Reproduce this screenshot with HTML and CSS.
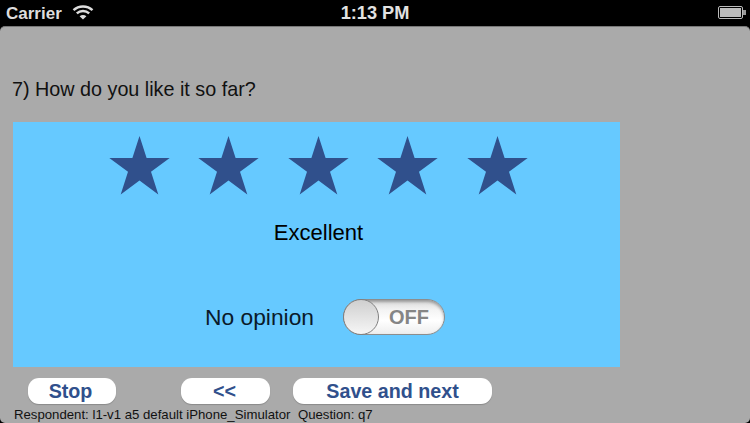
FILE: index.html
```html
<!DOCTYPE html>
<html lang="en">
<head>
<meta charset="utf-8">
<title>Survey question</title>
<link rel="stylesheet" href="styles.css">
</head>
<body>
<header class="status">
  <div class="status-left">
    <span class="carrier">Carrier</span>
    <svg class="wifi" width="22" height="16" viewBox="0 0 22 16"><path d="M1.5 6.2C6.8 1.2 15.2 1.2 20.5 6.2" fill="none" stroke="#ddd" stroke-width="2.4"/><path d="M4.8 9.4C8.2 6.2 13.8 6.2 17.2 9.4" fill="none" stroke="#ddd" stroke-width="2.4"/><path d="M11 15.5L7.6 12.3C9.6 10.6 12.4 10.6 14.4 12.3Z" fill="#ddd"/></svg>
  </div>
  <div class="status-time">1:13 PM</div>
  <div class="status-right">
    <div class="battery"><div class="battery-fill"></div></div>
    <div class="battery-tip"></div>
  </div>
</header>
<main class="screen">
  <p class="question">7) How do you like it so far?</p>
  <section class="panel">
    <div class="stars">
      <svg class="star" viewBox="0 0 61 59"><path d="M30.5 0L37.6 22H60.7L42 35.7L49.3 58.5L30.5 44.5L11.7 58.5L19 35.7L0.3 22H23.4Z"/></svg>
      <svg class="star" viewBox="0 0 61 59"><path d="M30.5 0L37.6 22H60.7L42 35.7L49.3 58.5L30.5 44.5L11.7 58.5L19 35.7L0.3 22H23.4Z"/></svg>
      <svg class="star" viewBox="0 0 61 59"><path d="M30.5 0L37.6 22H60.7L42 35.7L49.3 58.5L30.5 44.5L11.7 58.5L19 35.7L0.3 22H23.4Z"/></svg>
      <svg class="star" viewBox="0 0 61 59"><path d="M30.5 0L37.6 22H60.7L42 35.7L49.3 58.5L30.5 44.5L11.7 58.5L19 35.7L0.3 22H23.4Z"/></svg>
      <svg class="star" viewBox="0 0 61 59"><path d="M30.5 0L37.6 22H60.7L42 35.7L49.3 58.5L30.5 44.5L11.7 58.5L19 35.7L0.3 22H23.4Z"/></svg>
    </div>
    <div class="rating-label">Excellent</div>
    <div class="opinion">
      <span class="opinion-label">No opinion</span>
      <div class="switch">
        <div class="knob"></div>
        <span class="switch-text">OFF</span>
      </div>
    </div>
  </section>
  <nav class="actions">
    <button class="btn btn-stop">Stop</button>
    <button class="btn btn-back">&lt;&lt;</button>
    <button class="btn btn-next">Save and next</button>
  </nav>
  <footer class="meta">
    <span>Respondent: l1-v1 a5 default iPhone_Simulator</span>
    <span>Question: q7</span>
  </footer>
</main>
</body>
</html>
```
FILE: styles.css
```css
* { box-sizing: border-box; }
html, body { margin: 0; height: 100%; }
body {
  width: 750px;
  height: 423px;
  overflow: hidden;
  background: #000;
  font-family: "Liberation Sans", Arial, sans-serif;
  color: #000;
  display: flex;
  flex-direction: column;
}
.status {
  height: 26px;
  flex: none;
  display: grid;
  grid-template-columns: 1fr auto 1fr;
  align-items: center;
  padding: 1px 6px 0 6px;
  color: #ddd;
  font-size: 17px;
  font-weight: 700;
}
.status-left { display: flex; align-items: center; gap: 10px; }
.wifi { display: block; margin-top: -3px; }
.status-time { color: #e2e2e2; font-size: 18.2px; }
.status-right { display: flex; align-items: center; justify-content: flex-end; margin: -3px -2px 0 0; }
.battery { width: 25px; height: 13px; border: 1px solid #bbb; border-radius: 2px; padding: 1px; }
.battery-fill { height: 100%; background: #bdbdbd; }
.battery-tip { width: 3px; height: 5px; background: #999; }
.screen {
  flex: 1;
  background: #aaa;
  border-radius: 5px;
  border-top: 1px solid #777;
  padding: 49px 0 0 13px;
  display: flex;
  flex-direction: column;
}
.question {
  margin: 0 0 0 -1px;
  font-size: 19.75px;
  line-height: 26px;
  color: #111;
}
.panel {
  margin-top: 20px;
  width: 607px;
  height: 245px;
  background: #66c9ff;
  display: flex;
  flex-direction: column;
  align-items: center;
  padding-top: 14px;
}
.stars { display: flex; gap: 28.5px; margin-left: 3px; }
.star { display: block; width: 61px; height: 59px; fill: #30508c; }
.rating-label {
  margin-top: 24px;
  font-size: 22px;
  line-height: 28px;
  margin-left: 4px;
}
.opinion {
  margin-top: 52px;
  display: flex;
  align-items: center;
  gap: 29px;
  margin-left: 17px;
  color: #0a1a2a;
}
.opinion-label { font-size: 22.8px; }
.switch {
  position: relative;
  width: 102px;
  height: 36px;
  border-radius: 18px;
  border: 1px solid #8d8d8d;
  background: linear-gradient(#d8d8d8, #f4f4f4 30%, #fff 60%, #eee);
  box-shadow: inset 0 2px 3px rgba(0,0,0,.3);
  display: flex;
  align-items: center;
  justify-content: flex-end;
  padding-right: 15px;
}
.knob {
  position: absolute;
  left: -1px;
  top: -1px;
  width: 36px;
  height: 36px;
  border-radius: 50%;
  border: 1px solid #808080;
  background: linear-gradient(#cfcfcf, #f6f6f6);
}
.switch-text { font-size: 20px; font-weight: 700; color: #858585; }
.actions {
  margin-top: 11px;
  margin-left: 15px;
  display: flex;
  height: 26px;
}
.btn {
  height: 26px;
  padding: 0;
  border: 0;
  border-radius: 11px;
  background: #fff;
  box-shadow: 0 1px 1px #8a8a8a;
  color: #30508c;
  font-family: inherit;
  font-size: 19.7px;
  font-weight: 700;
  line-height: 26px;
}
.btn-stop { width: 88px; padding-right: 3px; }
.btn-back { width: 89px; margin-left: 65px; padding-right: 2px; }
.btn-next { width: 199px; margin-left: 23px; }
.meta {
  margin-top: 3px;
  margin-left: 1px;
  display: flex;
  gap: 7.5px;
  font-size: 13.2px;
  line-height: 15px;
  color: #111;
}
```
